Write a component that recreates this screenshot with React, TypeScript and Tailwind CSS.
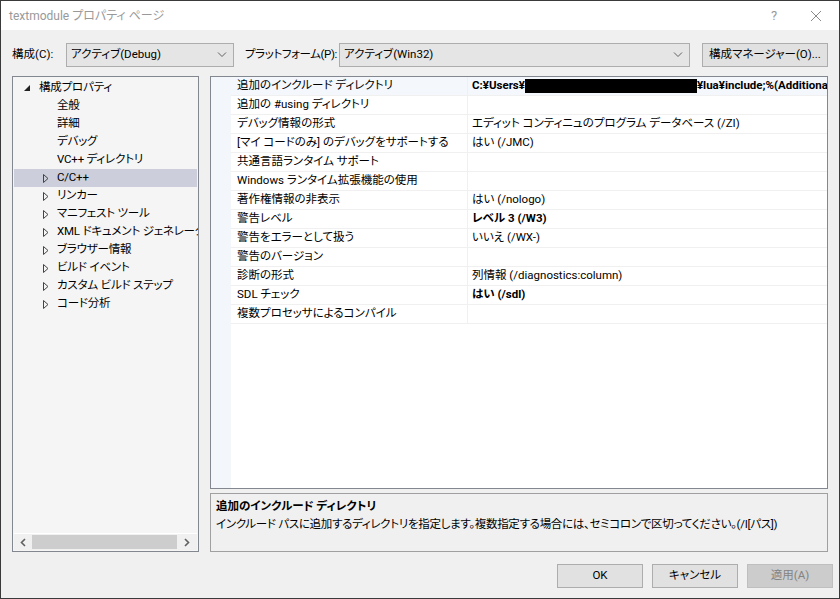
import React from "react"

const FONT = "font-['Roboto','Noto_Sans_CJK_JP',sans-serif] [font-feature-settings:'palt']"

const TREE = [
  { label: "構成プロパティ", level: 0, open: true },
  { label: "全般", level: 1 },
  { label: "詳細", level: 1 },
  { label: "デバッグ", level: 1 },
  { label: "VC++ ディレクトリ", level: 1 },
  { label: "C/C++", level: 1, expander: true, selected: true },
  { label: "リンカー", level: 1, expander: true },
  { label: "マニフェスト ツール", level: 1, expander: true },
  { label: "XML ドキュメント ジェネレーター", level: 1, expander: true },
  { label: "ブラウザー情報", level: 1, expander: true },
  { label: "ビルド イベント", level: 1, expander: true },
  { label: "カスタム ビルド ステップ", level: 1, expander: true },
  { label: "コード分析", level: 1, expander: true },
]

const PROPS: { name: string; value?: string; bold?: boolean }[] = [
  { name: "追加のインクルード ディレクトリ" },
  { name: "追加の #using ディレクトリ" },
  { name: "デバッグ情報の形式", value: "エディット コンティニュのプログラム データベース (/ZI)" },
  { name: "[マイ コードのみ] のデバッグをサポートする", value: "はい (/JMC)" },
  { name: "共通言語ランタイム サポート" },
  { name: "Windows ランタイム拡張機能の使用" },
  { name: "著作権情報の非表示", value: "はい (/nologo)" },
  { name: "警告レベル", value: "レベル 3 (/W3)", bold: true },
  { name: "警告をエラーとして扱う", value: "いいえ (/WX-)" },
  { name: "警告のバージョン" },
  { name: "診断の形式", value: "列情報 (/diagnostics:column)" },
  { name: "SDL チェック", value: "はい (/sdl)", bold: true },
  { name: "複数プロセッサによるコンパイル" },
]

function Chevron() {
  return (
    <svg width="10" height="6" viewBox="0 0 10 6" className="shrink-0">
      <path d="M1 0.5 L5 4.5 L9 0.5" fill="none" stroke="#606060" strokeWidth="1" />
    </svg>
  )
}

function Combo({ text, w }: { text: string; w: string }) {
  return (
    <div className={`${w} h-[24px] border border-[#adadad] bg-[#e5e5e5] flex items-center pl-[4px] pr-[6px]`}>
      <span className="flex-1 truncate">{text}</span>
      <Chevron />
    </div>
  )
}

function Button({ label, disabled }: { label: string; disabled?: boolean }) {
  return (
    <div className={`w-[86px] h-[24px] border flex items-center justify-center ${disabled ? "bg-[#cccccc] border-[#bfbfbf] text-[#838383]" : "bg-[#e1e1e1] border-[#adadad]"}`}>
      {label}
    </div>
  )
}

export default function App() {
  return (
    <div className={`${FONT} text-[11.5px] text-black w-[840px] h-[599px] border border-[#3a3a3a] bg-[#f0f0f0] flex flex-col overflow-hidden`}>
      {/* title bar */}
      <div className="h-[29px] bg-white flex items-center pl-[8px] text-[#999999] text-[12px] shrink-0">
        <span className="flex-1">textmodule プロパティ ページ</span>
        <span className="w-[20px] text-center text-[13px] mr-[26px]">?</span>
        <svg width="12" height="12" viewBox="0 0 12 12" className="mr-[17px]">
          <path d="M1 1 L11 11 M11 1 L1 11" stroke="#8a8a8a" strokeWidth="1" />
        </svg>
      </div>

      {/* config row */}
      <div className="flex items-center mt-[13px] pl-[11px] pr-[11px] h-[24px] shrink-0 whitespace-nowrap">
        <span className="w-[54px]">構成(C):</span>
        <Combo text="アクティブ(Debug)" w="w-[168px] shrink-0" />
        <span className="ml-[11px] mr-[2px] tracking-[-0.4px]">プラットフォーム(P):</span>
        <Combo text="アクティブ(Win32)" w="flex-1 min-w-0" />
        <div className="ml-[12px] w-[126px] shrink-0 h-[24px] border border-[#adadad] bg-[#e1e1e1] flex items-center justify-center">
          構成マネージャー(O)...
        </div>
      </div>

      {/* main */}
      <div className="flex mt-[9px] pl-[11px] pr-[11px] gap-[11px] h-[476px] shrink-0">
        {/* tree */}
        <div className="w-[187px] shrink-0 border border-[#828790] bg-[#f5f5f5] flex flex-col">
          <div className="flex-1 pt-[2px] px-[1px] overflow-hidden">
            {TREE.map((t) => (
              <div key={t.label}
                className={`h-[18px] flex items-center whitespace-nowrap ${t.selected ? "bg-[#cccedb]" : ""}`}>
                {t.level === 0 ? (
                  <span className="w-[24px] pl-[10px] flex items-center shrink-0">
                    <svg width="6" height="6" viewBox="0 0 6 6"><path d="M6 0 L6 6 L0 6 Z" fill="#222" /></svg>
                  </span>
                ) : (
                  <span className="w-[42px] pl-[29px] flex items-center shrink-0">
                    {t.expander && (
                      <svg width="6" height="9" viewBox="0 0 6 9"><path d="M0.5 0.5 L5 4.5 L0.5 8.5 Z" fill="none" stroke="#444" strokeWidth="1" /></svg>
                    )}
                  </span>
                )}
                <span className="ml-[1px] tracking-[-0.2px]">{t.label}</span>
              </div>
            ))}
          </div>
          <div className="h-[17px] border-t border-white bg-[#f0f0f0] flex items-center mx-[1px] mb-[1px] shrink-0">
            <span className="w-[18px] flex justify-center">
              <svg width="6" height="9" viewBox="0 0 6 9"><path d="M5 1 L1.5 4.5 L5 8" fill="none" stroke="#606060" strokeWidth="1.6" /></svg>
            </span>
            <div className="w-[145px] h-[14px] bg-[#cdcdcd]" />
            <span className="flex-1 flex justify-center">
              <svg width="6" height="9" viewBox="0 0 6 9"><path d="M1 1 L4.5 4.5 L1 8" fill="none" stroke="#606060" strokeWidth="1.6" /></svg>
            </span>
          </div>
        </div>

        {/* right column */}
        <div className="flex-1 min-w-0 flex flex-col gap-[4px]">
          <div className="h-[413px] border border-[#828790] bg-white flex overflow-hidden">
            <div className="w-[20px] bg-[#f3f6fb] shrink-0" />
            <div className="flex-1 min-w-0 overflow-hidden">
              {PROPS.map((p, i) => (
                <div key={p.name} className={`h-[19px] flex border-b border-[#f0f0f0] ${i === 0 ? "bg-[#f4f7fc]" : ""}`}>
                  <div className="w-[237px] pl-[6px] flex items-center border-r border-[#f0f0f0] whitespace-nowrap overflow-hidden shrink-0">
                    {p.name}
                  </div>
                  <div className={`flex-1 min-w-0 pl-[4px] flex items-center whitespace-nowrap overflow-hidden ${p.bold || i === 0 ? "font-bold" : ""}`}>
                    {i === 0 ? (
                      <>
                        <span className="shrink-0">C:¥Users¥</span>
                        <span className="inline-block w-[172px] h-[14px] bg-black shrink-0" />
                        <span className="shrink-0">¥lua¥include;%(AdditionalIncludeDirectories)</span>
                      </>
                    ) : p.value}
                  </div>
                </div>
              ))}
            </div>
          </div>
          <div className="flex-1 border border-[#a0a0a0] bg-[#f0f0f0] px-[5px] pt-[4px] whitespace-nowrap overflow-hidden">
            <div className="font-bold h-[18px] flex items-center">追加のインクルード ディレクトリ</div>
            <div className="h-[18px] flex items-center tracking-[-0.3px]">
              インクルード パスに追加するディレクトリを指定します。複数指定する場合には、セミコロンで区切ってください。(/I[パス])
            </div>
          </div>
        </div>
      </div>

      {/* buttons */}
      <div className="flex justify-end gap-[9px] mt-[12px] pr-[6px]">
        <Button label="OK" />
        <Button label="キャンセル" />
        <Button label="適用(A)" disabled />
      </div>
    </div>
  )
}
